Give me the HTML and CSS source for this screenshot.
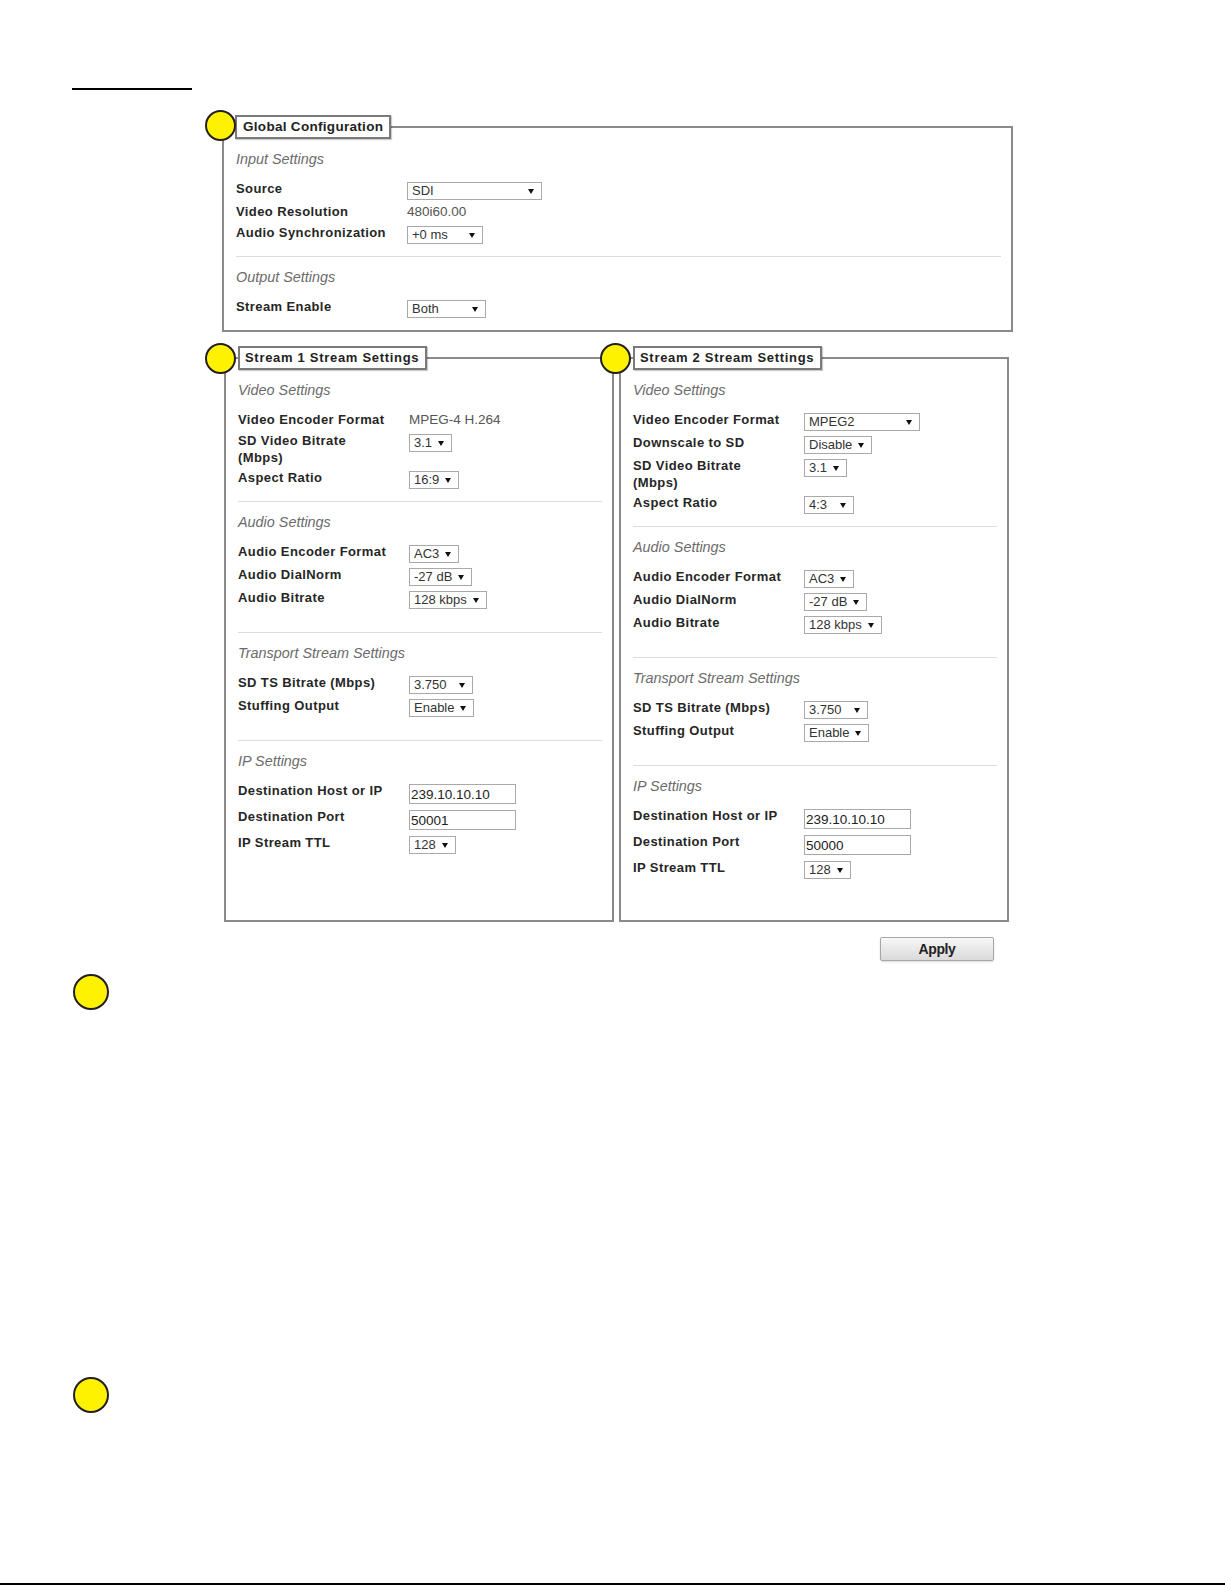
FILE: index.html
```html
<!DOCTYPE html>
<html lang="en">
<head>
    <meta charset="UTF-8">
    <title>Encoder Configuration</title>
    <link rel="stylesheet" href="styles.css">
</head>
<body>
    <div class="page">
        <div class="top-rule"></div>

        <div class="config">
            <!-- global settings -->
            <div class="panel panel-global">
                <span class="marker marker-global"></span>
                <div class="legend legend-global">Global Configuration</div>

                <div class="section section-short">
                    <div class="section-title">Input Settings</div>
                    <div class="row">
                        <div class="label">Source</div>
                        <div class="select w-source"><span>SDI</span><i class="caret"></i></div>
                    </div>
                    <div class="row">
                        <div class="label">Video Resolution</div>
                        <div class="value-text">480i60.00</div>
                    </div>
                    <div class="row">
                        <div class="label">Audio Synchronization</div>
                        <div class="select w-sync"><span>+0 ms</span><i class="caret"></i></div>
                    </div>
                </div>

                <div class="section">
                    <div class="section-title">Output Settings</div>
                    <div class="row">
                        <div class="label">Stream Enable</div>
                        <div class="select w-both"><span>Both</span><i class="caret"></i></div>
                    </div>
                </div>
            </div>

            <div class="streams">
                <!-- stream 1 -->
                <div class="panel panel-stream">
                    <span class="marker"></span>
                    <div class="legend">Stream 1 Stream Settings</div>

                    <div class="section section-short">
                        <div class="section-title">Video Settings</div>
                        <div class="row">
                            <div class="label">Video Encoder Format</div>
                            <div class="value-text">MPEG-4 H.264</div>
                        </div>
                        <div class="row">
                            <div class="label">SD Video Bitrate (Mbps)</div>
                            <div class="select"><span>3.1</span><i class="caret"></i></div>
                        </div>
                        <div class="row">
                            <div class="label">Aspect Ratio</div>
                            <div class="select w-ratio"><span>16:9</span><i class="caret"></i></div>
                        </div>
                    </div>

                    <div class="section">
                        <div class="section-title">Audio Settings</div>
                        <div class="row">
                            <div class="label">Audio Encoder Format</div>
                            <div class="select"><span>AC3</span><i class="caret"></i></div>
                        </div>
                        <div class="row">
                            <div class="label">Audio DialNorm</div>
                            <div class="select"><span>-27 dB</span><i class="caret"></i></div>
                        </div>
                        <div class="row">
                            <div class="label">Audio Bitrate</div>
                            <div class="select"><span>128 kbps</span><i class="caret"></i></div>
                        </div>
                    </div>

                    <div class="section">
                        <div class="section-title">Transport Stream Settings</div>
                        <div class="row">
                            <div class="label">SD TS Bitrate (Mbps)</div>
                            <div class="select w-ts"><span>3.750</span><i class="caret"></i></div>
                        </div>
                        <div class="row">
                            <div class="label">Stuffing Output</div>
                            <div class="select"><span>Enable</span><i class="caret"></i></div>
                        </div>
                    </div>

                    <div class="section">
                        <div class="section-title">IP Settings</div>
                        <div class="row">
                            <div class="label">Destination Host or IP</div>
                            <input class="field" type="text" value="239.10.10.10">
                        </div>
                        <div class="row">
                            <div class="label">Destination Port</div>
                            <input class="field" type="text" value="50001">
                        </div>
                        <div class="row">
                            <div class="label">IP Stream TTL</div>
                            <div class="select"><span>128</span><i class="caret"></i></div>
                        </div>
                    </div>
                </div>

                <!-- stream 2 -->
                <div class="panel panel-stream">
                    <span class="marker"></span>
                    <div class="legend">Stream 2 Stream Settings</div>

                    <div class="section section-short">
                        <div class="section-title">Video Settings</div>
                        <div class="row">
                            <div class="label">Video Encoder Format</div>
                            <div class="select w-codec"><span>MPEG2</span><i class="caret"></i></div>
                        </div>
                        <div class="row">
                            <div class="label">Downscale to SD</div>
                            <div class="select"><span>Disable</span><i class="caret"></i></div>
                        </div>
                        <div class="row">
                            <div class="label">SD Video Bitrate (Mbps)</div>
                            <div class="select"><span>3.1</span><i class="caret"></i></div>
                        </div>
                        <div class="row">
                            <div class="label">Aspect Ratio</div>
                            <div class="select w-ratio"><span>4:3</span><i class="caret"></i></div>
                        </div>
                    </div>

                    <div class="section">
                        <div class="section-title">Audio Settings</div>
                        <div class="row">
                            <div class="label">Audio Encoder Format</div>
                            <div class="select"><span>AC3</span><i class="caret"></i></div>
                        </div>
                        <div class="row">
                            <div class="label">Audio DialNorm</div>
                            <div class="select"><span>-27 dB</span><i class="caret"></i></div>
                        </div>
                        <div class="row">
                            <div class="label">Audio Bitrate</div>
                            <div class="select"><span>128 kbps</span><i class="caret"></i></div>
                        </div>
                    </div>

                    <div class="section">
                        <div class="section-title">Transport Stream Settings</div>
                        <div class="row">
                            <div class="label">SD TS Bitrate (Mbps)</div>
                            <div class="select w-ts"><span>3.750</span><i class="caret"></i></div>
                        </div>
                        <div class="row">
                            <div class="label">Stuffing Output</div>
                            <div class="select"><span>Enable</span><i class="caret"></i></div>
                        </div>
                    </div>

                    <div class="section">
                        <div class="section-title">IP Settings</div>
                        <div class="row">
                            <div class="label">Destination Host or IP</div>
                            <input class="field" type="text" value="239.10.10.10">
                        </div>
                        <div class="row">
                            <div class="label">Destination Port</div>
                            <input class="field" type="text" value="50000">
                        </div>
                        <div class="row">
                            <div class="label">IP Stream TTL</div>
                            <div class="select"><span>128</span><i class="caret"></i></div>
                        </div>
                    </div>
                </div>
            </div>

            <div class="actions">
                <button class="apply-btn">Apply</button>
            </div>
        </div>

        <span class="note-marker note-first"></span>
        <span class="note-marker note-second"></span>

        <div class="bottom-rule"></div>
    </div>
</body>
</html>
```

FILE: styles.css
```css
* {
    margin: 0;
    padding: 0;
    box-sizing: border-box;
}

html, body {
    overflow: hidden;
}

body {
    background: #fff;
    color: #262626;
    font-family: 'Liberation Sans', Arial, sans-serif;
}

.page {
    padding-top: 88px;
}

.top-rule {
    width: 120px;
    height: 2px;
    margin-left: 72px;
    background: #000;
}

.config {
    width: 791px;
    margin: 36px 0 0 222px;
}

/* boxes */
.panel {
    position: relative;
    border: 2px solid #8a8a8a;
    padding: 0 10px 9px 12px;
    background: #fff;
}

.panel-stream {
    width: 390px;
    padding-bottom: 38px;
}

.legend {
    width: fit-content;
    margin-top: -13px;
    padding: 0 6px 0 5px;
    border: 2px solid #7a7a7a;
    background: #fff;
    box-shadow: 1px 1px 1px rgba(0, 0, 0, 0.2);
    font-size: 13px;
    font-weight: bold;
    letter-spacing: 0.7px;
    line-height: 20px;
    color: #222;
}

.legend-global {
    margin-left: -1px;
    padding: 0 6px;
    font-size: 13.5px;
    letter-spacing: 0.3px;
}

.marker {
    position: absolute;
    top: -16px;
    left: -21px;
    width: 31px;
    height: 31px;
    border-radius: 50%;
    border: 2px solid #231f20;
    background: #fff200;
}

.marker-global {
    top: -18px;
    left: -19px;
}

.streams {
    display: flex;
    gap: 5px;
    margin: 25px 0 0 2px;
}

/* sections */
.section {
    border-bottom: 1px solid #dcdcdc;
    padding-bottom: 20px;
}

.section-short {
    padding-bottom: 9px;
}

.section:last-child {
    border-bottom: 0;
    padding-bottom: 0;
}

.section-title {
    margin: 10px 0 11px;
    font-size: 14.4px;
    font-style: italic;
    line-height: 20px;
    color: #6b6b6b;
}

.row {
    display: flex;
    align-items: flex-start;
    min-height: 18px;
    margin-bottom: 3px;
}

.label {
    flex: none;
    width: 153px;
    margin-right: 18px;
    font-size: 13px;
    font-weight: bold;
    letter-spacing: 0.4px;
    line-height: 17px;
    color: #262626;
}

.value-text {
    font-size: 13.5px;
    line-height: 17px;
    color: #555;
}

/* fake dropdowns */
.select {
    display: flex;
    align-items: center;
    justify-content: space-between;
    gap: 6px;
    height: 18px;
    margin-top: 2px;
    padding: 0 7px 0 4px;
    border: 1px solid #a9a9a9;
    background: #fff;
    font-size: 13px;
    line-height: 16px;
    color: #333;
}

.caret {
    width: 0;
    height: 0;
    border-left: 3px solid transparent;
    border-right: 3px solid transparent;
    border-top: 5px solid #111;
}

.w-source { min-width: 135px; }
.w-sync { min-width: 76px; }
.w-both { min-width: 79px; }
.w-ratio { min-width: 50px; }
.w-ts { min-width: 64px; }
.w-codec { min-width: 116px; }

.field {
    display: block;
    width: 107px;
    height: 20px;
    margin: 2px 0 1px;
    padding: 0 0 0 1px;
    border: 1px solid #a9a9a9;
    outline: none;
    font-family: 'Liberation Sans', Arial, sans-serif;
    font-size: 13.5px;
    color: #222;
}

.actions {
    display: flex;
    justify-content: flex-end;
    margin-top: 15px;
    padding-right: 19px;
}

.apply-btn {
    width: 114px;
    height: 24px;
    border: 1px solid #a7a7a7;
    border-radius: 2px;
    background: linear-gradient(#f7f7f7, #dadada);
    box-shadow: 0 1px 2px rgba(0, 0, 0, 0.15);
    font-family: 'Liberation Sans', Arial, sans-serif;
    font-size: 14px;
    font-weight: bold;
    letter-spacing: -0.4px;
    color: #222;
}

.note-marker {
    display: block;
    width: 36px;
    height: 36px;
    margin-left: 73px;
    border-radius: 50%;
    border: 2.5px solid #231f20;
    background: #fff200;
}

.note-first {
    margin-top: 13px;
}

.note-second {
    margin-top: 367px;
}

.bottom-rule {
    height: 2px;
    margin-top: 170px;
    background: #000;
}
```
